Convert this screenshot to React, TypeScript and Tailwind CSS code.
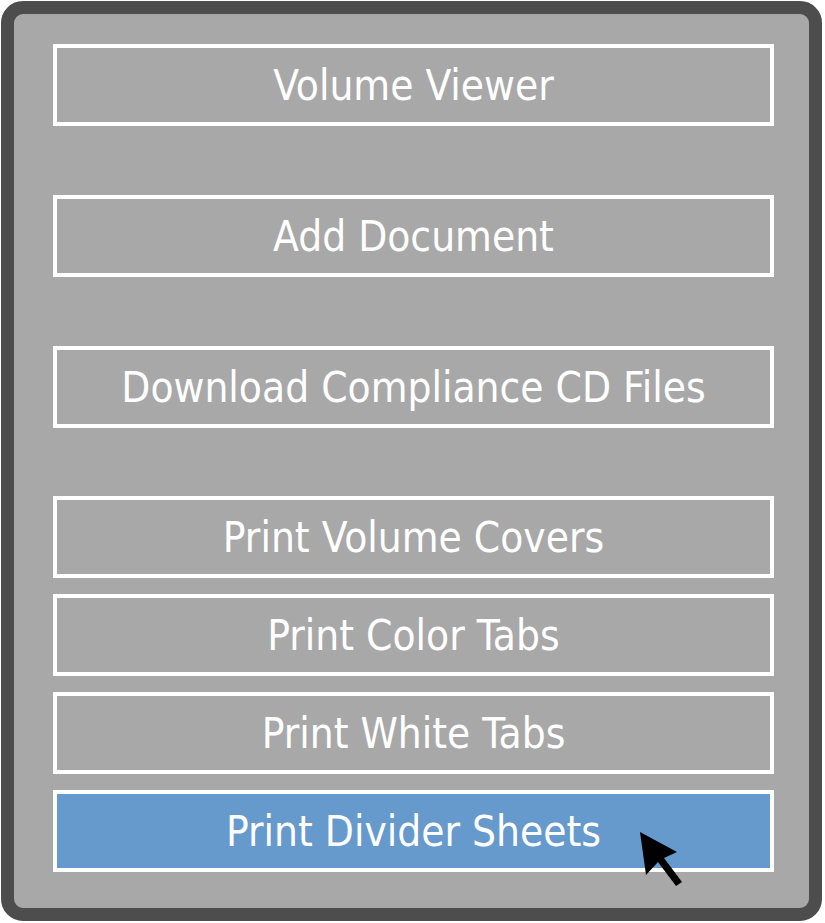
const topItems = ["Volume Viewer", "Add Document", "Download Compliance CD Files"];
const printItems = ["Print Volume Covers", "Print Color Tabs", "Print White Tabs", "Print Divider Sheets"];

function MenuButton({ label, active }: { label: string; active?: boolean }) {
  return (
    <button
      type="button"
      className={`flex h-[82px] w-full items-center justify-center border-4 border-white pt-[2px] text-[42px] leading-none text-white font-stretch-condensed [font-family:'DejaVu_Sans_Condensed','DejaVu_Sans',sans-serif] ${
        active ? "bg-[#6699cc]" : "bg-transparent"
      }`}
    >
      {label}
    </button>
  );
}

function Cursor() {
  return (
    <svg
      className="pointer-events-none absolute left-0 top-0 h-[923px] w-[825px]"
      viewBox="0 0 825 923"
    >
      <polygon
        points="640,832 677,852 664,858 682,882 676,886 658,862 646,875"
        fill="#000"
      />
    </svg>
  );
}

export default function App() {
  return (
    <div className="relative h-[923px] w-[825px] bg-white p-px">
      <div className="h-[920px] w-[821px] rounded-[22px] border-[13px] border-[#4d4d4d] bg-[#a8a8a8] pl-[39px] pr-[35px] pt-[30px]">
        <div className="flex flex-col gap-[69px]">
          {topItems.map((item) => (
            <MenuButton key={item} label={item} />
          ))}
        </div>
        <div className="mt-[68px] flex flex-col gap-[16px]">
          {printItems.map((item, i) => (
            <MenuButton key={item} label={item} active={i === printItems.length - 1} />
          ))}
        </div>
      </div>
      <Cursor />
    </div>
  );
}
